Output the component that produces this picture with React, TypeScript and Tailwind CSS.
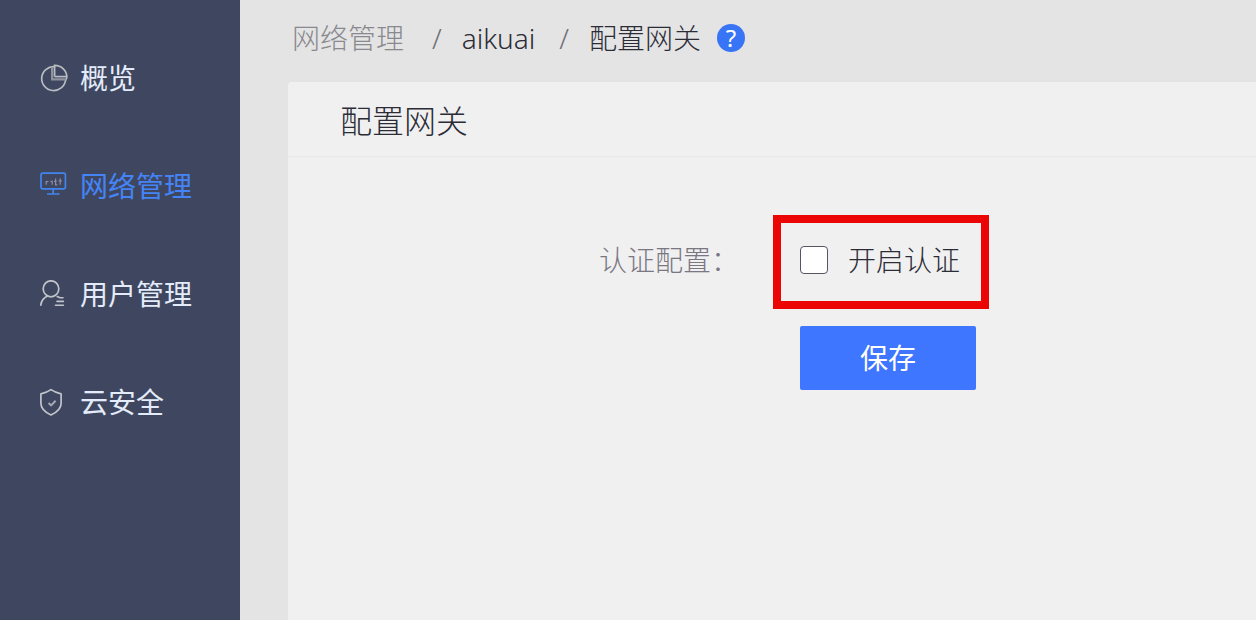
import { useState } from 'react'
import type { ReactNode } from 'react'
import clsx from 'clsx'

type NavItem = {
  key: string
  label: string
  icon: ReactNode
}

function OverviewIcon() {
  return (
    <svg viewBox="0 0 28 28" className="size-7" fill="none" stroke="#b9bcc3" strokeWidth="1.7" aria-hidden="true">
      <path d="M14.4 2.6A12 12 0 1 0 25.6 16" />
      <path d="M14.6 12.6V1.4C21.4 1.4 27 6.6 26.8 13.2C26.7 14.4 26.3 15.3 25.6 16" />
      <path d="M14.6 12.6H26.6" />
      <path d="M12.2 3V15.4H25.6" stroke="#8f949e" strokeWidth="2.4" />
    </svg>
  )
}

function NetworkIcon() {
  return (
    <svg viewBox="0 0 28 28" className="size-7" fill="none" stroke="#4285ee" strokeWidth="1.7" aria-hidden="true">
      <rect x="1" y="1.2" width="24.4" height="15.6" rx="1.6" />
      <path d="M13.2 16.8V21.4M7 22H19.6" />
      <path d="M6.2 12.8V9.6H8.4M10.4 9.4H12.2V12.8M14 9.4H16.6M15.6 6.6V12.8H17.4M20.2 6.2V12.8M18.6 8.8H21.8" stroke="#8c8aa5" strokeWidth="1.2" />
    </svg>
  )
}

function UserIcon() {
  return (
    <svg viewBox="0 0 28 28" className="size-7" fill="none" stroke="#c1c4ca" strokeWidth="1.7" strokeLinecap="round" aria-hidden="true">
      <ellipse cx="11" cy="8.8" rx="7.8" ry="8" />
      <path d="M7.5 16C3.5 17.8 1.2 20.8.8 25.2" />
      <path d="M17.2 16.6L20 17.8H23M17 21.4H23.4M15.5 25.2H23.4" strokeWidth="1.6" />
    </svg>
  )
}

function SecurityIcon() {
  return (
    <svg viewBox="0 0 28 28" className="size-7" fill="none" stroke="#c1c4ca" strokeWidth="1.7" strokeLinejoin="round" aria-hidden="true">
      <path d="M11 1.6C8 3.7 4.2 5.1.9 5.8V15.4C.9 20.7 5.2 24.2 11 27C16.8 24.2 21.1 20.7 21.1 15.4V5.8C17.8 5.1 14 3.7 11 1.6Z" />
      <path d="M8.6 15L11.2 17.4L15.6 12.8" stroke="#a5a9b4" strokeWidth="2" />
    </svg>
  )
}

const NAV_ITEMS: NavItem[] = [
  { key: 'overview', label: '概览', icon: <OverviewIcon /> },
  { key: 'network', label: '网络管理', icon: <NetworkIcon /> },
  { key: 'users', label: '用户管理', icon: <UserIcon /> },
  { key: 'security', label: '云安全', icon: <SecurityIcon /> },
]

function Sidebar({ active }: { active: string }) {
  return (
    <nav className="w-60 shrink-0 bg-[#3e475f] pt-6">
      {NAV_ITEMS.map((item) => (
        <a
          key={item.key}
          href={`#${item.key}`}
          aria-current={item.key === active ? 'page' : undefined}
          className={clsx(
            'flex h-[108px] items-center gap-3 pl-10 text-[28px] leading-10',
            item.key === active ? 'text-[#4584f7]' : 'text-[#e4ebfa]',
          )}
        >
          {item.icon}
          {item.label}
        </a>
      ))}
    </nav>
  )
}

function Breadcrumb() {
  return (
    <header className="flex h-[82px] items-center pb-1.5 pl-[52px] text-[28px] leading-10 font-light text-[#2c2c37]">
      <a href="#network" className="text-[#89898f]">网络管理</a>
      <span className="ml-7 text-[#707078]">/</span>
      <a href="#aikuai" className="ml-5">aikuai</a>
      <span className="ml-6 text-[#707078]">/</span>
      <span className="ml-5">配置网关</span>
      <button
        type="button"
        aria-label="帮助"
        className="ml-4 flex size-7 items-center justify-center rounded-full bg-[#3875f6] text-2xl leading-7 font-normal text-white"
      >
        ?
      </button>
    </header>
  )
}

export default function App() {
  const [enabled, setEnabled] = useState(false)

  return (
    <div className="flex min-h-screen bg-[#e4e4e4] font-['Noto_Sans','Noto_Sans_CJK_SC',sans-serif]">
      <Sidebar active="network" />

      <main className="flex min-w-0 flex-1 flex-col">
        <Breadcrumb />

        <section className="ml-12 flex-1 rounded-tl-sm bg-[#f0f0f1]">
          <h1 className="border-b border-[#e8e8ea] pt-[15px] pb-[11px] pl-[52px] text-[32px] leading-12 font-light text-[#2c2c37]">
            配置网关
          </h1>

          <form className="pt-[58px]" onSubmit={(e) => e.preventDefault()}>
            <div className="flex items-start">
              <div className="w-[485px] shrink-0 pt-[25px] pr-[34px] text-right text-[28px] leading-10 font-light text-[#7a7783]">
                认证配置：
              </div>
              <div className="border-8 border-[#eb0505] px-[19px] pt-[17px] pb-[21px]">
                <label className="flex items-center gap-5 pr-0.5 text-[28px] leading-10 font-light text-[#2c2c37]">
                  <input
                    type="checkbox"
                    checked={enabled}
                    onChange={(e) => setEnabled(e.target.checked)}
                    className="size-7 appearance-none rounded-sm border border-[#555563] bg-white checked:bg-[#3f76ff]"
                  />
                  开启认证
                </label>
              </div>
            </div>

            <button
              type="submit"
              className="mt-[17px] ml-[512px] h-16 w-44 rounded-xs bg-[#3f76ff] text-[28px] leading-10 text-white"
            >
              保存
            </button>
          </form>
        </section>
      </main>
    </div>
  )
}
